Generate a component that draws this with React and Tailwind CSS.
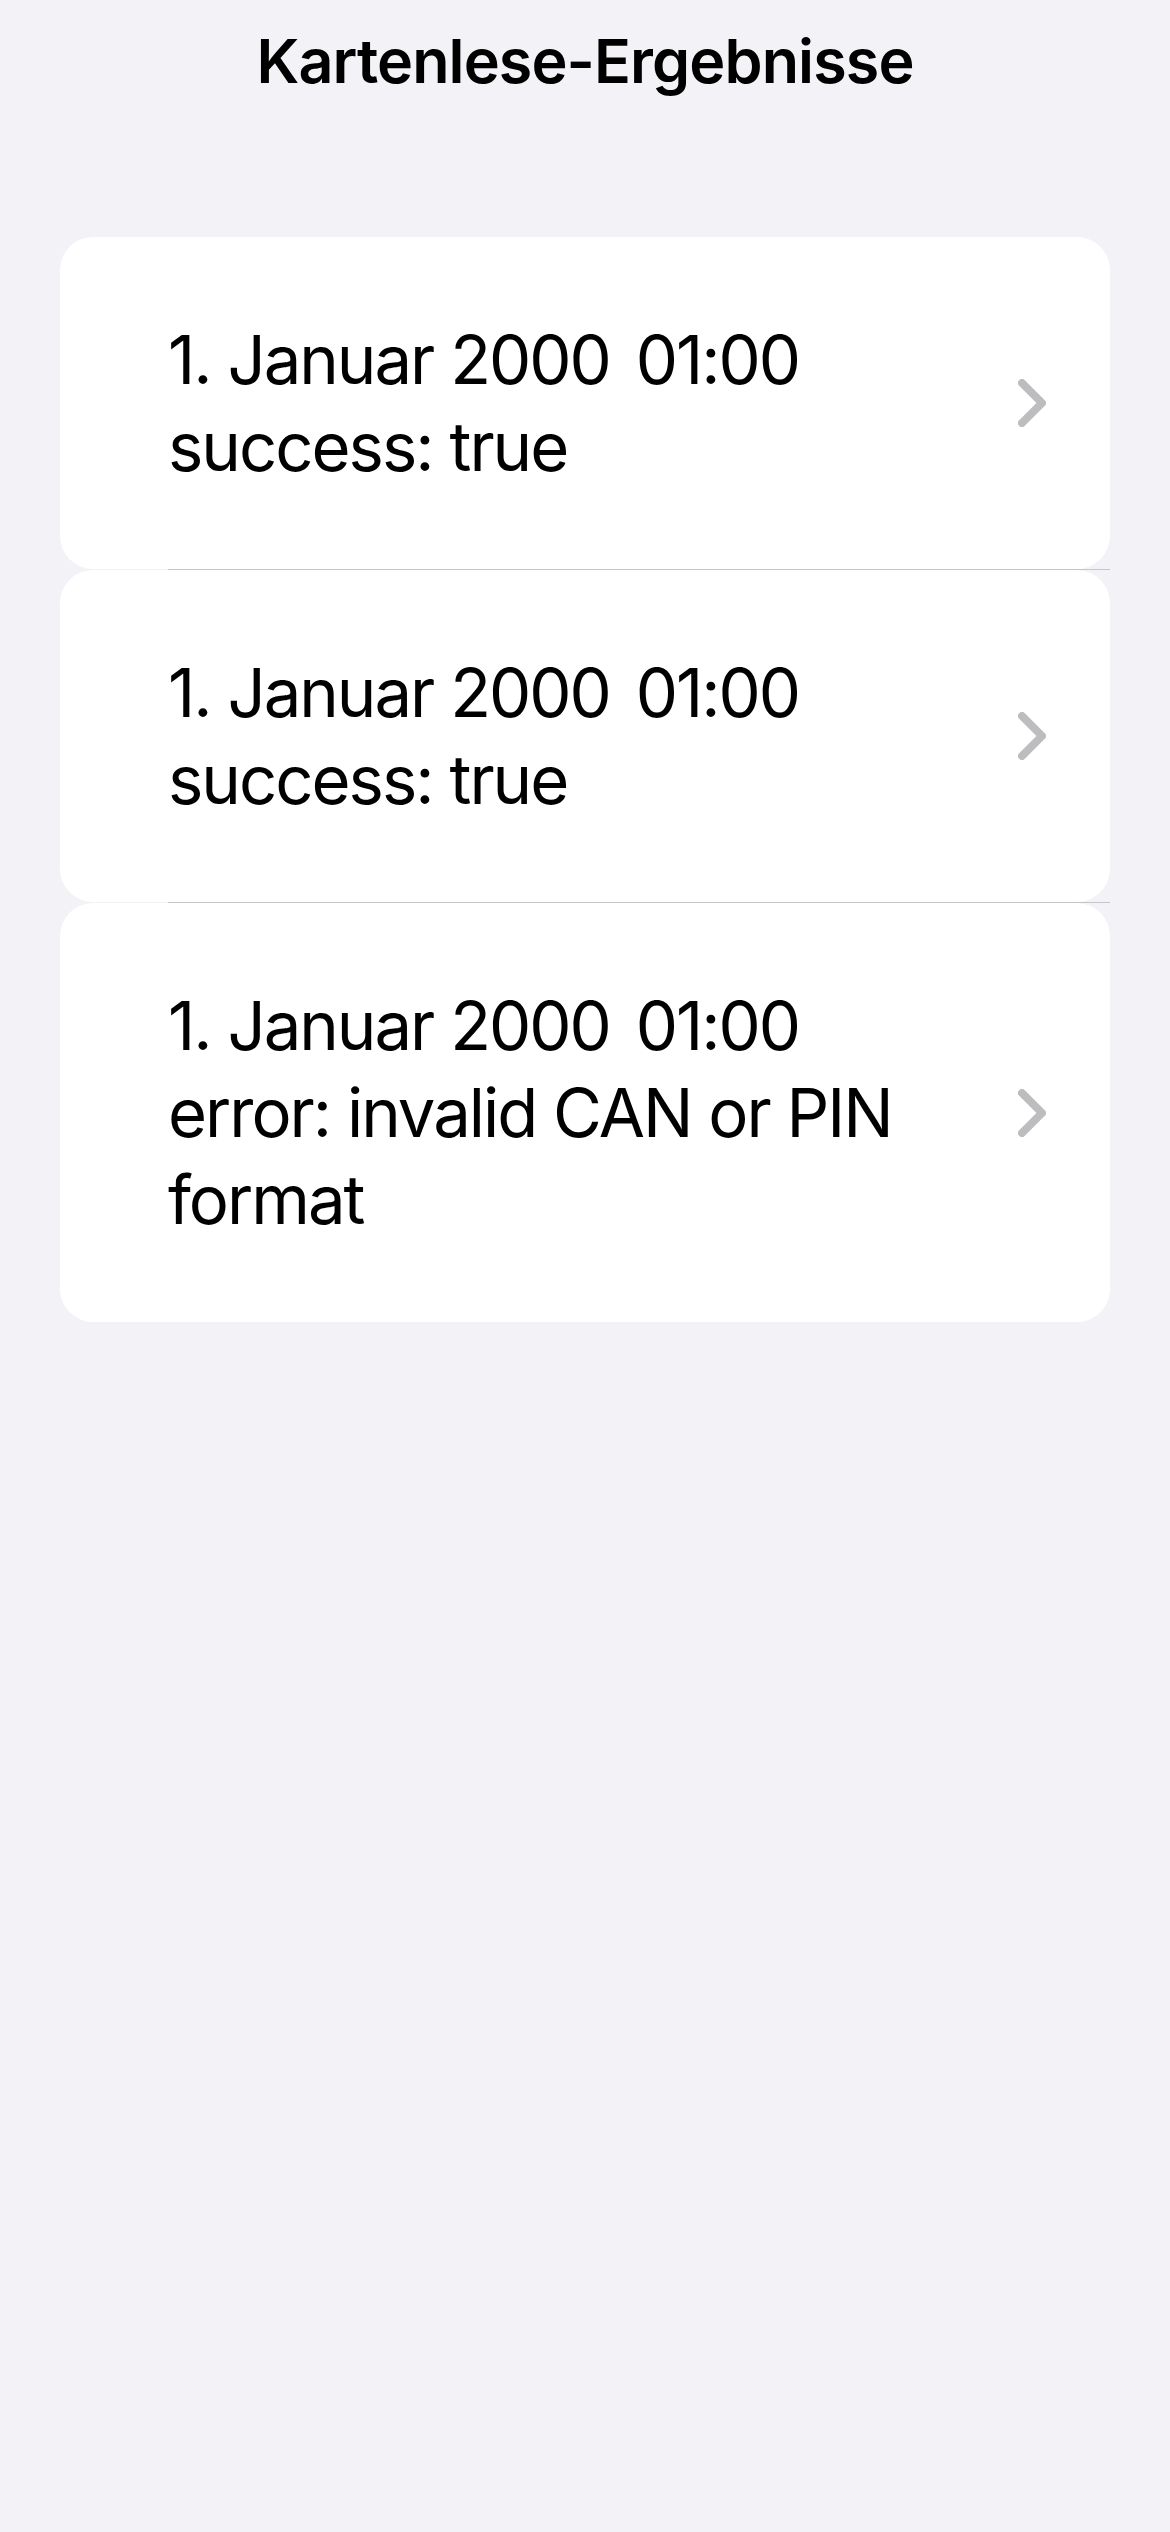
import React from "react";

const rows = [
  ["1. Januar 2000", "01:00", "success: true"],
  ["1. Januar 2000", "01:00", "success: true"],
  ["1. Januar 2000", "01:00", "error: invalid CAN or PIN format"],
];

function Chevron() {
  return (
    <svg width="28" height="48" viewBox="0 0 28 48" fill="none" className="shrink-0">
      <path d="M4 4 L24 24 L4 44" stroke="#bdbdc0" strokeWidth="8" strokeLinecap="round" strokeLinejoin="round" />
    </svg>
  );
}

export default function App() {
  return (
    <div
      className="min-h-[2532px] w-[1170px] bg-[#f2f2f7] text-black"
      style={{ fontFamily: 'Inter, "Noto Sans", "Liberation Sans", sans-serif' }}
    >
      <div className="pt-[21px] text-center text-[61px] font-semibold leading-[80px] tracking-[-0.9px]">
        Kartenlese-Ergebnisse
      </div>
      <div className="mx-[60px] mt-[136px] flex flex-col">
        {rows.map((r, i) => (
          <React.Fragment key={i}>
            <div className="flex items-center rounded-[33px] bg-white py-[79px] pl-[108px] pr-[64px]">
              <div className="flex-1 pr-[40px] text-[67px] leading-[87px] tracking-[-2px]">
                <div className="whitespace-nowrap">
                  {r[0]} <span className="ml-[9px]">{r[1]}</span>
                </div>
                <div>{r[2]}</div>
              </div>
              <Chevron />
            </div>
            {i < rows.length - 1 && <div className="ml-[108px] h-px bg-[#c6c6c8]" />}
          </React.Fragment>
        ))}
      </div>
    </div>
  );
}
